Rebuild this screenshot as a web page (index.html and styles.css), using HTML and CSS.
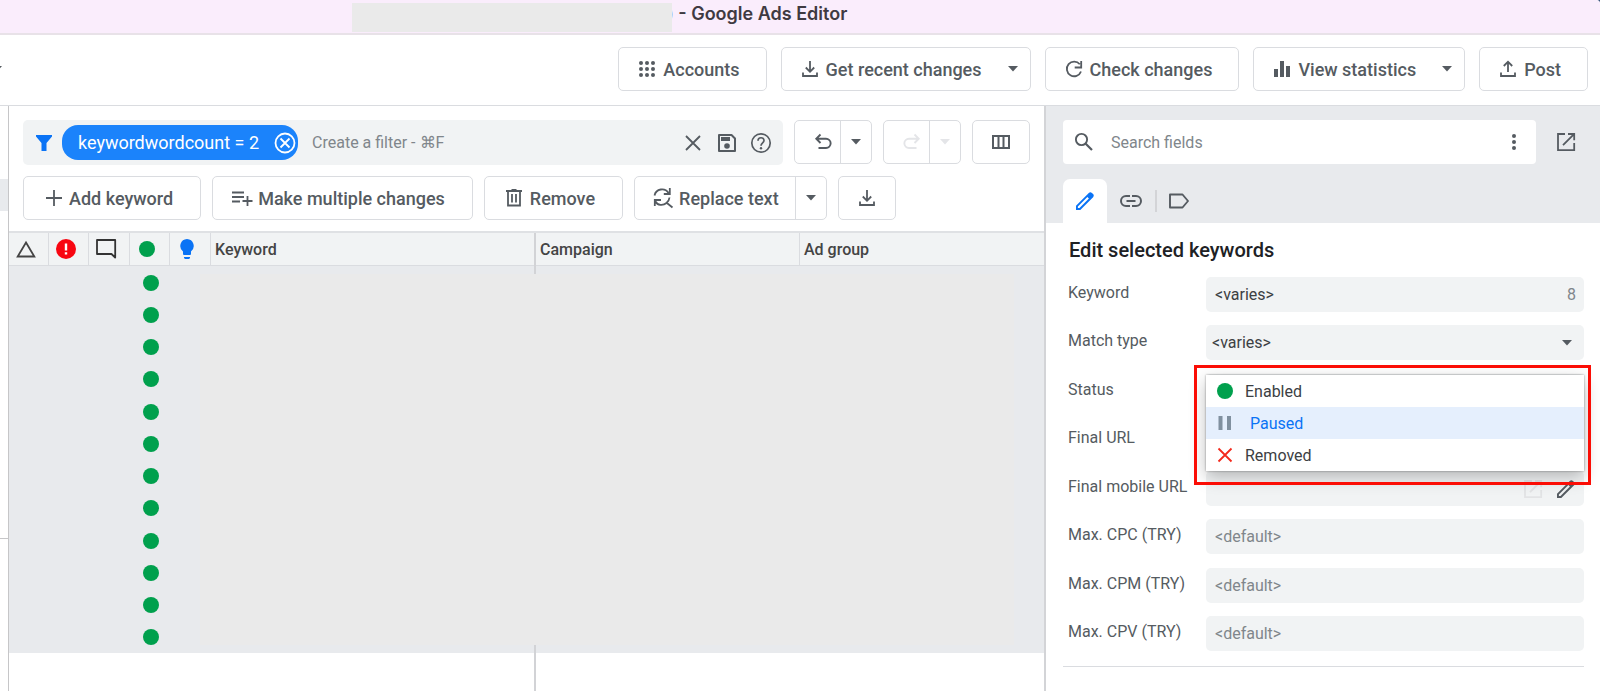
FILE: index.html
```html
<!DOCTYPE html>
<html lang="en">
<head>
  <meta charset="UTF-8">
  <title>Google Ads Editor</title>
  <link rel="stylesheet" href="styles.css">
</head>
<body>
  <svg class="sprite" aria-hidden="true">
    <symbol id="i-caret" viewBox="0 0 10 6"><path d="M0 0h10L5 5.5z" fill="currentColor"/></symbol>
    <symbol id="i-download" viewBox="0 0 20 20"><path d="M10 2v10.5M5.8 8.5l4.2 4.3 4.2-4.3M3 13.5V17h14v-3.5" fill="none" stroke="currentColor" stroke-width="1.8"/></symbol>
    <symbol id="i-upload" viewBox="0 0 20 20"><path d="M10 13V3M5.8 7l4.2-4.3L14.2 7M3 13.5V17h14v-3.5" fill="none" stroke="currentColor" stroke-width="1.8"/></symbol>
    <symbol id="i-pencil" viewBox="0 0 20 20"><path d="M1 19v-4.200L13.800 1.900c.9-.9 2.200-.9 3.100 0l1.200 1.200c.9.900.9 2.200 0 3.100L5.300 19zM2.900 17.100h1.600l9.400-9.500-1.500-1.500-9.500 9.500z" fill="currentColor" fill-rule="evenodd"/></symbol>
    <symbol id="i-open" viewBox="0 0 20 20"><path d="M9 2H2v16.2h16.2V11M12 2h6.2v6.200M18 2.200L7 13.200" fill="none" stroke="currentColor" stroke-width="1.8"/></symbol>
  </svg>

  <div class="window">
    <header class="titlebar">
      <span class="title-mask"></span>
      <h1>) - Google Ads Editor</h1>
    </header>

    <div class="toolbar">
      <svg class="caret account-caret"><use href="#i-caret"/></svg>
      <button class="btn"><svg class="icon" viewBox="0 0 20 20"><g fill="currentColor"><circle cx="4" cy="4" r="2"/><circle cx="10" cy="4" r="2"/><circle cx="16" cy="4" r="2"/><circle cx="4" cy="10" r="2"/><circle cx="10" cy="10" r="2"/><circle cx="16" cy="10" r="2"/><circle cx="4" cy="16" r="2"/><circle cx="10" cy="16" r="2"/><circle cx="16" cy="16" r="2"/></g></svg>Accounts</button>
      <button class="btn has-caret"><svg class="icon"><use href="#i-download"/></svg>Get recent changes<svg class="caret"><use href="#i-caret"/></svg></button>
      <button class="btn"><svg class="icon" viewBox="0 0 20 20"><path d="M15.8 5.300A7.300 7.300 0 1 0 17 12.500M17.200 2v6.500h-6.500" fill="none" stroke="currentColor" stroke-width="1.8"/></svg>Check changes</button>
      <button class="btn has-caret"><svg class="icon" viewBox="0 0 20 20"><path d="M2 10h4v8H2zM8 2h4v16H8zM14 7h4v11h-4z" fill="currentColor"/></svg>View statistics<svg class="caret"><use href="#i-caret"/></svg></button>
      <button class="btn"><svg class="icon"><use href="#i-upload"/></svg>Post</button>
    </div>

    <div class="workspace">
      <nav class="sidebar">
        <div class="sidebar-selected"></div>
        <div class="sidebar-bottom"></div>
      </nav>

      <main class="main">
        <div class="filter-row">
          <div class="filter-box">
            <svg class="icon funnel" viewBox="0 0 20 20"><path d="M2 2h16v1.500L12.500 10v8h-5v-8L2 3.500z" fill="currentColor"/></svg>
            <span class="chip">keywordwordcount = 2
              <button class="chip-close" aria-label="Remove filter"><svg viewBox="0 0 22 22"><circle cx="11" cy="11" r="9.500" fill="none" stroke="currentColor" stroke-width="1.8"/><path d="M6.500 6.500l9 9M15.500 6.500l-9 9" stroke="currentColor" stroke-width="1.8"/></svg></button>
            </span>
            <input class="filter-input" type="text" aria-label="Filter" placeholder="Create a filter - ⌘F">
            <button class="icon-btn" aria-label="Clear"><svg viewBox="0 0 22 22"><path d="M4 4l14 14M18 4L4 18" stroke="currentColor" stroke-width="1.8"/></svg></button>
            <button class="icon-btn" aria-label="Save filter"><svg viewBox="0 0 22 22"><path d="M3 3h12.500L19 6.500V19H3z" fill="none" stroke="currentColor" stroke-width="2" stroke-linejoin="round"/><path d="M5 5h9v4H5z" fill="currentColor"/><circle cx="11" cy="14" r="2.800" fill="currentColor"/></svg></button>
            <button class="icon-btn" aria-label="Help"><svg viewBox="0 0 22 22"><circle cx="11" cy="11" r="9.200" fill="none" stroke="currentColor" stroke-width="1.700"/><path d="M8 8.800c0-4 6-4 6-.2 0 2.300-3 2.400-3 5.200" fill="none" stroke="currentColor" stroke-width="1.700"/><circle cx="11" cy="16.200" r="1.200" fill="currentColor"/></svg></button>
          </div>
          <div class="split">
            <button class="split-main" aria-label="Undo"><svg class="icon" viewBox="0 0 20 20"><path d="M7.500 2.500L3.300 6.700l4.200 4.300M3.500 6.700H13a4.600 4.600 0 0 1 0 9.300H5.500" fill="none" stroke="currentColor" stroke-width="1.9"/></svg></button>
            <button class="split-caret" aria-label="Undo history"><svg class="caret"><use href="#i-caret"/></svg></button>
          </div>
          <div class="split disabled">
            <button class="split-main" aria-label="Redo" disabled><svg class="icon" viewBox="0 0 20 20"><path d="M12.500 2.500l4.200 4.200-4.200 4.300M16.500 6.700H7A4.600 4.600 0 0 0 7 16h7.500" fill="none" stroke="currentColor" stroke-width="1.9"/></svg></button>
            <button class="split-caret" aria-label="Redo history" disabled><svg class="caret"><use href="#i-caret"/></svg></button>
          </div>
          <button class="btn square" aria-label="Columns"><svg class="icon" viewBox="0 0 20 20"><path d="M2 4h16v12H2zM7.500 4v12M12.500 4v12" fill="none" stroke="currentColor" stroke-width="2"/></svg></button>
        </div>

        <div class="action-row">
          <button class="btn"><svg class="icon" viewBox="0 0 20 20"><path d="M11 2v16M3 10h16" stroke="currentColor" stroke-width="1.8"/></svg>Add keyword</button>
          <button class="btn"><svg class="icon" viewBox="0 0 20 20"><path d="M0 4.500h12M0 9h12M0 13.500h8M15.500 8v10M10.500 13h10" fill="none" stroke="currentColor" stroke-width="1.8"/></svg>Make multiple changes</button>
          <button class="btn"><svg class="icon" viewBox="0 0 20 20"><path d="M2 3h16M7.500 1.800h5M4 3v14.500h12V3M8 6v8.500M12 6v8.500" fill="none" stroke="currentColor" stroke-width="1.8"/></svg>Remove</button>
          <div class="split">
            <button class="split-main"><svg class="icon" viewBox="0 0 20 20"><path d="M1.500 7.500C3 .5 12 -.7 15.500 5M16.800 0v6h-6M8 12H1.800v6M2.500 13.500c2 4 7.500 4.500 11 1.500 2-1.700 2.800-3.500 3-5.500M13.300 14.500l6.200 5" fill="none" stroke="currentColor" stroke-width="1.8"/></svg>Replace text</button>
            <button class="split-caret" aria-label="More replace options"><svg class="caret"><use href="#i-caret"/></svg></button>
          </div>
          <button class="btn square" aria-label="Download"><svg class="icon"><use href="#i-download"/></svg></button>
        </div>

        <div class="grid">
          <table>
            <colgroup>
              <col class="c-warn"><col class="c-error"><col class="c-note"><col class="c-status"><col class="c-idea">
              <col class="c-keyword"><col class="c-campaign"><col>
            </colgroup>
            <thead>
              <tr>
                <th aria-label="Warnings"><svg viewBox="0 0 22 22"><path d="M11 4.500L19.300 18.500H2.700z" fill="none" stroke="#444" stroke-width="1.800"/></svg></th>
                <th aria-label="Errors"><svg viewBox="0 0 22 22"><circle cx="11" cy="11" r="10" fill="#f80611"/><path d="M11 5.500v7M11 14.200v2.300" stroke="#fff" stroke-width="2.400"/></svg></th>
                <th aria-label="Comments"><svg viewBox="0 0 22 22"><path d="M2 2h18.200v17.500L16.500 16H2z" fill="none" stroke="#333" stroke-width="1.800" stroke-linejoin="round"/></svg></th>
                <th aria-label="Status"><span class="dot"></span></th>
                <th aria-label="Recommendations"><svg viewBox="0 0 22 22"><path d="M11 1a7 7 0 0 1 4 12.500V16a1 1 0 0 1-1 1H8a1 1 0 0 1-1-1v-2.500A7 7 0 0 1 11 1zM8 19h6v1l-1 1H9l-1-1z" fill="#0a73f5"/></svg></th>
                <th>Keyword</th>
                <th>Campaign</th>
                <th>Ad group</th>
              </tr>
            </thead>
            <tbody>
              <tr><td colspan="3"></td><td><span class="dot"></span></td><td colspan="4"></td></tr>
              <tr><td colspan="3"></td><td><span class="dot"></span></td><td colspan="4"></td></tr>
              <tr><td colspan="3"></td><td><span class="dot"></span></td><td colspan="4"></td></tr>
              <tr><td colspan="3"></td><td><span class="dot"></span></td><td colspan="4"></td></tr>
              <tr><td colspan="3"></td><td><span class="dot"></span></td><td colspan="4"></td></tr>
              <tr><td colspan="3"></td><td><span class="dot"></span></td><td colspan="4"></td></tr>
              <tr><td colspan="3"></td><td><span class="dot"></span></td><td colspan="4"></td></tr>
              <tr><td colspan="3"></td><td><span class="dot"></span></td><td colspan="4"></td></tr>
              <tr><td colspan="3"></td><td><span class="dot"></span></td><td colspan="4"></td></tr>
              <tr><td colspan="3"></td><td><span class="dot"></span></td><td colspan="4"></td></tr>
              <tr><td colspan="3"></td><td><span class="dot"></span></td><td colspan="4"></td></tr>
              <tr><td colspan="3"></td><td><span class="dot"></span></td><td colspan="4"></td></tr>
            </tbody>
          </table>
          <div class="frozen-line"></div>
          <div class="grid-mask"></div>
        </div>
      </main>

      <aside class="panel">
        <div class="panel-head">
          <div class="search-row">
            <div class="search-box">
              <svg class="icon" viewBox="0 0 20 20"><circle cx="7.500" cy="7.500" r="5.600" fill="none" stroke="currentColor" stroke-width="1.900"/><path d="M11.500 11.500l6.500 6.500" stroke="currentColor" stroke-width="2.200"/></svg>
              <input type="text" aria-label="Search fields" placeholder="Search fields">
              <button class="icon-btn" aria-label="More"><svg viewBox="0 0 22 22"><g fill="currentColor"><circle cx="11" cy="5" r="2"/><circle cx="11" cy="11" r="2"/><circle cx="11" cy="17" r="2"/></g></svg></button>
            </div>
            <button class="icon-btn" aria-label="Open in window"><svg><use href="#i-open"/></svg></button>
          </div>
          <div class="tabs">
            <button class="tab active" aria-label="Edit"><svg class="icon"><use href="#i-pencil"/></svg></button>
            <button class="tab" aria-label="URLs"><svg viewBox="0 0 22 14"><path d="M10 2H6a5 5 0 0 0 0 10h4M12 2h4a5 5 0 0 1 0 10h-4M6.500 7h9" fill="none" stroke="currentColor" stroke-width="2"/></svg></button>
            <span class="tab-divider"></span>
            <button class="tab" aria-label="Labels"><svg viewBox="0 0 22 16"><path d="M2 1.500h12.500L20 8l-5.500 6.500H2z" fill="none" stroke="currentColor" stroke-width="1.9" stroke-linejoin="round"/></svg></button>
          </div>
        </div>

        <form class="fields">
          <h2>Edit selected keywords</h2>
          <div class="field">
            <label for="f-keyword">Keyword</label>
            <div class="control"><input id="f-keyword" type="text" value="&lt;varies&gt;"><span class="count">8</span></div>
          </div>
          <div class="field">
            <label for="f-match">Match type</label>
            <div class="control"><select id="f-match"><option>&lt;varies&gt;</option></select><svg class="caret"><use href="#i-caret"/></svg></div>
          </div>
          <div class="field">
            <label for="f-status">Status</label>
            <div class="control">
              <button id="f-status" class="status-toggle" type="button" aria-haspopup="listbox" aria-expanded="true"></button>
              <ul class="menu" role="listbox" aria-label="Status">
                <li role="option"><span class="dot"></span>Enabled</li>
                <li role="option" class="selected" aria-selected="true"><svg viewBox="0 0 16 16"><path d="M1.500 1h4v14h-4zM10 1h4v14h-4z" fill="#80909f"/></svg>Paused</li>
                <li role="option"><svg viewBox="0 0 16 16"><path d="M1.500 1.500l13 13M14.500 1.500l-13 13" stroke="#f3291c" stroke-width="1.8"/></svg>Removed</li>
              </ul>
            </div>
          </div>
          <div class="field">
            <label for="f-url">Final URL</label>
            <div class="control"><input id="f-url" type="text"></div>
          </div>
          <div class="field">
            <label for="f-mobile">Final mobile URL</label>
            <div class="control">
              <input id="f-mobile" type="text">
              <button type="button" class="icon-btn faded" aria-label="Open URL" disabled><svg><use href="#i-open"/></svg></button>
              <button type="button" class="icon-btn" aria-label="Edit URL"><svg><use href="#i-pencil"/></svg></button>
            </div>
          </div>
          <div class="field">
            <label for="f-cpc">Max. CPC (TRY)</label>
            <div class="control"><input id="f-cpc" type="text" placeholder="&lt;default&gt;"></div>
          </div>
          <div class="field">
            <label for="f-cpm">Max. CPM (TRY)</label>
            <div class="control"><input id="f-cpm" type="text" placeholder="&lt;default&gt;"></div>
          </div>
          <div class="field">
            <label for="f-cpv">Max. CPV (TRY)</label>
            <div class="control"><input id="f-cpv" type="text" placeholder="&lt;default&gt;"></div>
          </div>
          <hr>
        </form>
      </aside>
    </div>
  </div>
</body>
</html>
```
FILE: styles.css
```css
* {
  box-sizing: border-box;
}
html {
  background: #3c5a80;
}
body {
  margin: 0;
  font-family: Roboto, "Liberation Sans", sans-serif;
  font-size: 16px;
  color: #555b61;
}
button, input, select {
  font: inherit;
  color: inherit;
  margin: 0;
}
button {
  padding: 0;
  border: none;
  background: none;
}
input, select {
  border: none;
  background: none;
  outline: none;
  min-width: 0;
}
input::placeholder {
  color: #80868b;
  opacity: 1;
}
svg {
  display: block;
  flex: none;
  overflow: visible;
}
.sprite {
  position: absolute;
  width: 0;
  height: 0;
}
.icon {
  width: 20px;
  height: 20px;
}
.caret {
  width: 10px;
  height: 6px;
}
.dot {
  display: block;
  flex: none;
  width: 16px;
  height: 16px;
  border-radius: 50%;
  background: #00a04d;
}
.window {
  display: flex;
  flex-direction: column;
  min-height: 100vh;
  background: #fff;
  border-radius: 0 4px 0 0;
  overflow: hidden;
}

/* title bar */
.titlebar {
  display: flex;
  align-items: flex-start;
  height: 35px;
  padding: 3px 0 0 22%;
  background: #faedfc;
  border-bottom: 2px solid #e8e2e8;
}
.title-mask {
  position: relative;
  z-index: 1;
  width: 320px;
  height: 29px;
  margin-right: -5px;
  background: #eaeaea;
}
.titlebar h1 {
  margin: 0;
  font-family: Inter, sans-serif;
  font-size: 18px;
  line-height: 22px;
  font-weight: 600;
  color: #3f3a42;
}

/* buttons */
.btn, .split {
  display: flex;
  align-items: center;
  height: 44px;
  border: 1px solid #dadce0;
  border-radius: 5px;
  background: #fff;
}
.btn, .split-main {
  font-size: 18px;
  font-weight: 500;
  white-space: nowrap;
}
.btn {
  padding: 0 26px 0 18px;
  gap: 6px;
}
.has-caret {
  padding-right: 12px;
}
.has-caret .caret {
  margin-left: 20px;
}
.square {
  width: 58px;
  padding: 0;
  justify-content: center;
}
.split-main {
  display: flex;
  align-items: center;
  gap: 6px;
  height: 42px;
  padding: 0 16px 0 18px;
  border-right: 1px solid #dadce0;
}
.split-caret {
  display: flex;
  align-items: center;
  justify-content: center;
  width: 30px;
  height: 42px;
}
.disabled .icon, .disabled .caret {
  color: #e4e5e8;
}
.icon-btn svg {
  width: 22px;
  height: 22px;
}
.toolbar {
  display: flex;
  justify-content: flex-end;
  gap: 14px;
  padding: 12px 12px 14px;
  border-bottom: 1px solid #dadce0;
}
.account-caret {
  align-self: center;
  margin: 0 auto 0 -20px;
}

/* layout */
.workspace {
  display: flex;
  flex: 1;
}
.sidebar {
  display: flex;
  flex-direction: column;
  width: 9px;
  padding-top: 73px;
  border-right: 1px solid #c6c6c8;
}
.sidebar-selected {
  height: 32px;
  background: #e8eaed;
}
.sidebar-bottom {
  margin-top: 327px;
  border-top: 1px solid #c6c6c8;
}
.main {
  display: flex;
  flex-direction: column;
  flex: 1;
  min-width: 0;
  padding-top: 14px;
}
.filter-row, .action-row {
  display: flex;
  gap: 11px;
  padding: 0 14px;
}
.filter-box {
  display: flex;
  align-items: center;
  flex: 1;
  height: 45px;
  padding: 0 11px;
  border-radius: 5px;
  background: #f1f3f4;
}
.filter-box .icon-btn + .icon-btn {
  margin-left: 12px;
}
.funnel {
  margin-right: 8px;
  color: #0a73f5;
}
.chip {
  display: flex;
  align-items: center;
  gap: 15px;
  height: 35px;
  padding: 0 2px 0 16px;
  border-radius: 16px;
  background: #1b83fb;
  color: #fff;
  font-size: 18px;
  white-space: nowrap;
}
.chip-close svg {
  width: 22px;
  height: 22px;
}
.filter-input {
  flex: 1;
  margin-left: 14px;
  padding: 0;
}
.filter-row .split-main {
  padding: 0 7px 0 18px;
}
.action-row {
  margin: 11px 0;
}
.action-row .btn:not(.square) {
  padding: 0 27px 0 19px;
}

/* keyword grid */
.grid {
  position: relative;
  flex: 1;
  border-top: 2px solid #dfe1e4;
}
.grid table {
  width: 100%;
  table-layout: fixed;
  border-collapse: separate;
  border-spacing: 0;
}
.c-warn, .c-error, .c-status {
  width: 40px;
}
.c-note, .c-idea {
  width: 41px;
}
.c-keyword {
  width: 325px;
}
.c-campaign {
  width: 264px;
}
.grid th {
  height: 33px;
  padding: 0 4px;
  border-right: 1px solid #dadce0;
  border-bottom: 1px solid #dadce0;
  background: #f1f3f4;
  color: #444;
  font-weight: 500;
  text-align: left;
}
.grid th:last-child {
  border-right: none;
}
.grid th svg {
  width: 22px;
  height: 22px;
  margin-left: 2px;
}
.grid th .dot {
  margin-left: 5px;
}
.grid td {
  height: 32px;
  padding: 0 0 0 13px;
  background: #e8eaed;
}
.grid tbody tr:nth-child(4n + 1) td {
  height: 33px;
}
.frozen-line {
  position: absolute;
  top: 0;
  bottom: 0;
  left: 525px;
  width: 2px;
  background: #d2d3d6;
}
.grid-mask {
  position: absolute;
  top: 41px;
  left: 191px;
  right: 30px;
  height: 371px;
  background: #eaeaea;
}

/* edit panel */
.panel {
  width: 556px;
  border-left: 2px solid #d3d4d7;
}
.panel-head {
  padding: 14px 16px 0 17px;
  background: #e8eaed;
}
.search-row {
  display: flex;
  align-items: center;
  gap: 20px;
  padding-right: 8px;
}
.search-row > .icon-btn svg {
  width: 20px;
  height: 20px;
}
.search-box {
  display: flex;
  align-items: center;
  flex: 1;
  height: 44px;
  padding: 0 11px;
  border-radius: 4px;
  background: #fff;
}
.search-box input {
  flex: 1;
  padding: 0 0 0 17px;
}
.tabs {
  display: flex;
  align-items: center;
  margin-top: 15px;
}
.tab {
  display: flex;
  align-items: center;
  justify-content: center;
  width: 48px;
  height: 44px;
}
.tab svg {
  width: 22px;
}
.tab.active {
  width: 44px;
  border-radius: 7px 7px 0 0;
  background: #fff;
  color: #0a73f5;
}
.tab.active svg {
  width: 20px;
}
.tab-divider {
  width: 2px;
  height: 22px;
  background: #d3d4d7;
}
.tab-divider + .tab {
  width: 44px;
}
.fields {
  padding: 15px 16px 16px 17px;
}
.fields h2 {
  margin: 0 0 15px 6px;
  font-size: 20px;
  line-height: 24px;
  font-weight: 500;
  color: #202124;
}
.field {
  display: flex;
  margin-top: 14px;
  padding-left: 5px;
}
.field:nth-of-type(even) {
  margin-top: 13px;
}
.field label {
  width: 138px;
  line-height: 32px;
}
.control {
  position: relative;
  display: flex;
  align-items: center;
  flex: 1;
  height: 35px;
  border-radius: 5px;
  background: #f1f3f4;
}
.control input {
  flex: 1;
  height: 35px;
  padding: 0 9px;
  color: #3c4043;
}
.control select {
  appearance: none;
  flex: 1;
  height: 35px;
  padding: 0 6px;
  color: #3c4043;
}
.control > .caret {
  margin-right: 12px;
}
.control .icon-btn {
  margin-right: 8px;
}
.control .icon-btn svg {
  width: 20px;
  height: 20px;
}
.control .faded {
  margin-right: 13px;
  color: #e2e3e5;
}
.count {
  margin-right: 8px;
  color: #80868b;
}
.status-toggle {
  flex: 1;
  height: 35px;
}

/* status drop-down, with the red frame round it */
.menu {
  position: absolute;
  z-index: 2;
  top: 1px;
  left: 0;
  right: 0;
  margin: 0;
  padding: 0;
  list-style: none;
  background: #fff;
  color: #3c4043;
  box-shadow: 0 0 2px rgba(0, 0, 0, 0.4), 0 6px 16px rgba(0, 0, 0, 0.25);
}
.menu::after {
  content: "";
  position: absolute;
  top: -10px;
  right: -7px;
  bottom: -14px;
  left: -12px;
  border: 3px solid #fb0d05;
  pointer-events: none;
}
.menu li {
  display: flex;
  align-items: center;
  gap: 12px;
  height: 32px;
  padding-left: 11px;
}
.menu svg {
  width: 16px;
  height: 16px;
}
.menu .selected {
  gap: 17px;
  background: #e5effd;
  color: #0a73f5;
}
.fields hr {
  margin: 15px 0 0;
  border: none;
  border-top: 1px solid #dadce0;
}
```
